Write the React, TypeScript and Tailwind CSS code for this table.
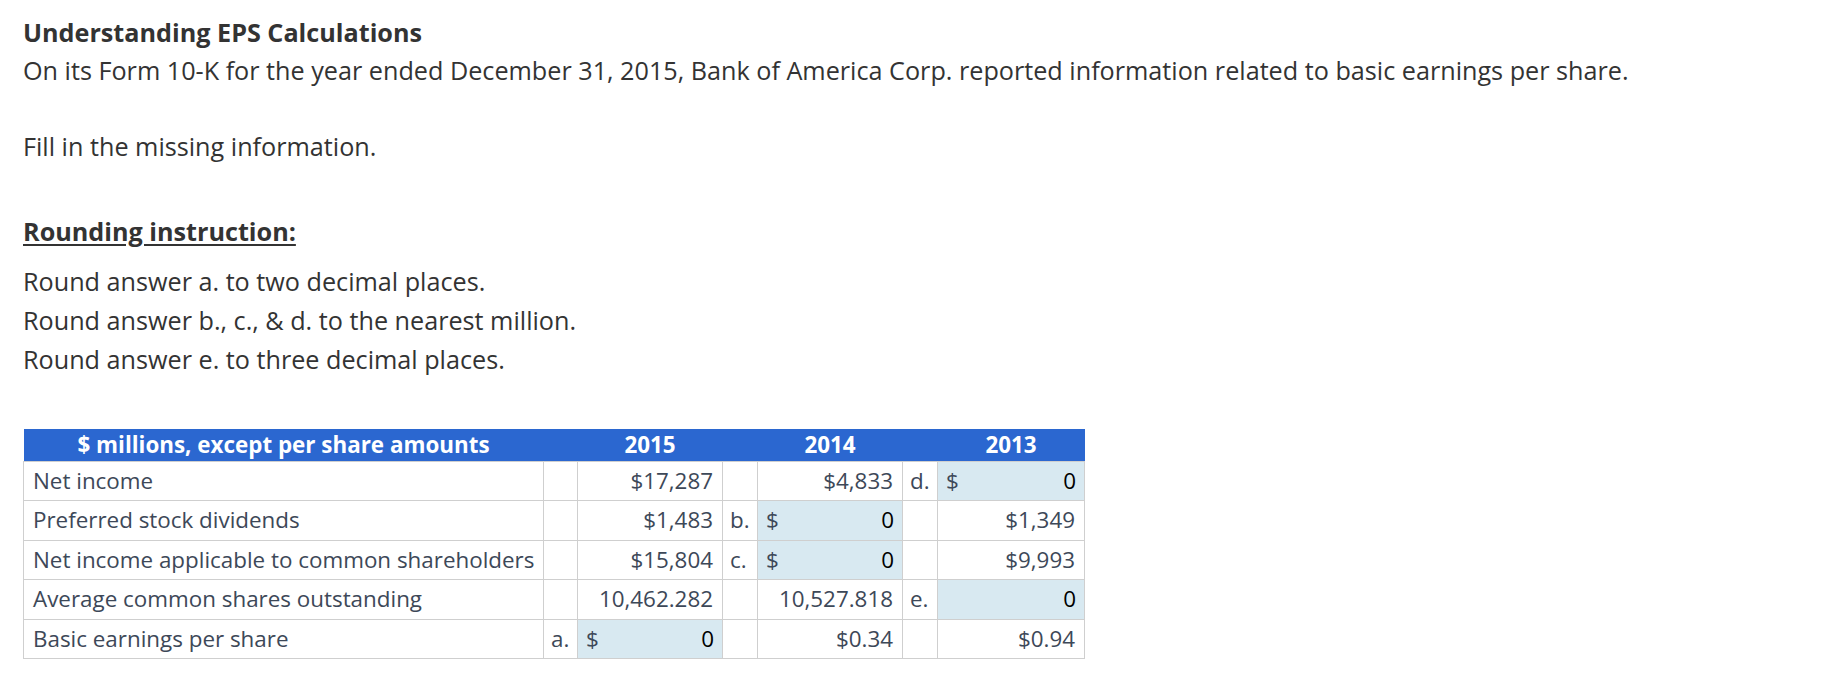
const rows: {
  label: string;
  cells: { letter?: string; value?: string; input?: boolean; dollar?: boolean }[];
}[] = [
  {
    label: "Net income",
    cells: [{ value: "$17,287" }, { value: "$4,833" }, { letter: "d.", input: true, dollar: true }],
  },
  {
    label: "Preferred stock dividends",
    cells: [{ value: "$1,483" }, { letter: "b.", input: true, dollar: true }, { value: "$1,349" }],
  },
  {
    label: "Net income applicable to common shareholders",
    cells: [{ value: "$15,804" }, { letter: "c.", input: true, dollar: true }, { value: "$9,993" }],
  },
  {
    label: "Average common shares outstanding",
    cells: [{ value: "10,462.282" }, { value: "10,527.818" }, { letter: "e.", input: true }],
  },
  {
    label: "Basic earnings per share",
    cells: [{ letter: "a.", input: true, dollar: true }, { value: "$0.34" }, { value: "$0.94" }],
  },
];

export default function App() {
  return (
    <div className="min-h-[682px] bg-white pl-[23px] pt-[14px] text-[25.2px] text-[#333] [font-family:'Open_Sans',sans-serif]">
      <h1 className="font-bold leading-[37px]">Understanding EPS Calculations</h1>
      <p className="leading-[39px]">
        On its Form 10-K for the year ended December 31, 2015, Bank of America Corp. reported information related to basic earnings per share.
      </p>
      <p className="mt-[37px] leading-[39px]">Fill in the missing information.</p>

      <p className="mt-[46px] font-bold leading-[39px] underline underline-offset-[3px]">Rounding instruction:</p>
      <div className="mt-[11px] leading-[39px]">
        <p>Round answer a. to two decimal places.</p>
        <p>Round answer b., c., &amp; d. to the nearest million.</p>
        <p>Round answer e. to three decimal places.</p>
      </div>

      <table className="mt-[50px] w-[1061px] table-fixed border-collapse whitespace-nowrap text-[22.4px] text-[#3d4858]">
        <colgroup>
          <col className="w-[520px]" />
          <col className="w-[34px]" />
          <col className="w-[145px]" />
          <col className="w-[35px]" />
          <col className="w-[145px]" />
          <col className="w-[35px]" />
          <col className="w-[147px]" />
        </colgroup>
        <thead>
          <tr className="h-[32px] bg-[#2b67d0] font-bold text-white">
            <th className="p-0 text-center leading-none">$ millions, except per share amounts</th>
            <th className="p-0" />
            <th className="p-0 text-center leading-none">2015</th>
            <th className="p-0" />
            <th className="p-0 text-center leading-none">2014</th>
            <th className="p-0" />
            <th className="p-0 text-center leading-none">2013</th>
          </tr>
        </thead>
        <tbody>
          {rows.map((r) => (
            <tr key={r.label} className="h-[39.5px]">
              <td className="overflow-visible border border-[#cfcfcf] px-[9px] leading-none">{r.label}</td>
              {r.cells.map((c, i) => [
                <td key={`l${i}`} className="border border-[#cfcfcf] px-[7px] leading-none">
                  {c.letter ?? ""}
                </td>,
                c.input ? (
                  <td key={`v${i}`} className="border border-[#cfcfcf] bg-[#d8e9f1] px-[8px] leading-none">
                    <div className="flex items-center justify-between">
                      <span>{c.dollar ? "$" : ""}</span>
                      <span className="text-black">0</span>
                    </div>
                  </td>
                ) : (
                  <td key={`v${i}`} className="border border-[#cfcfcf] px-[9px] text-right leading-none">
                    {c.value}
                  </td>
                ),
              ])}
            </tr>
          ))}
        </tbody>
      </table>
    </div>
  );
}
